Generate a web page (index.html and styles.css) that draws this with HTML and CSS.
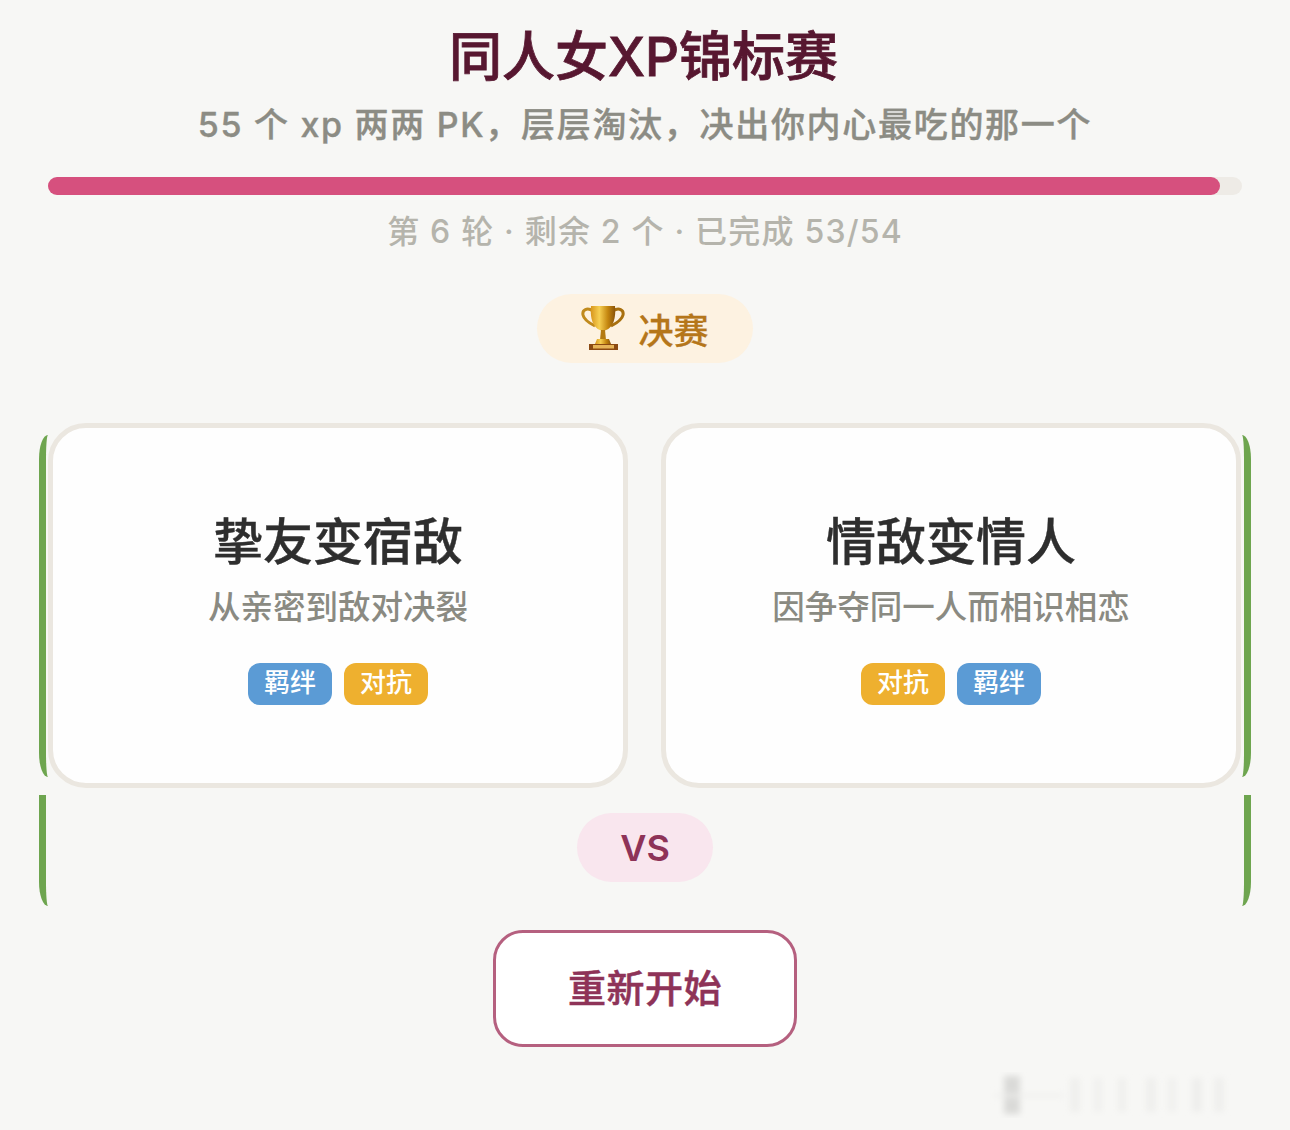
FILE: index.html
```html
<!DOCTYPE html>
<html lang="zh-CN">
<head>
    <meta charset="UTF-8">
    <meta name="viewport" content="width=device-width, initial-scale=1.0">
    <title>同人女XP锦标赛</title>
    <link rel="stylesheet" href="styles.css">
</head>
<body>
<div class="page">
    <h1 class="title">同人女XP锦标赛</h1>
    <p class="subtitle">55 个 xp 两两 PK，层层淘汰，决出你内心最吃的那一个</p>

    <div class="progress"><div class="progress-fill"></div></div>
    <p class="round-info">第 6 轮 · 剩余 2 个 · 已完成 53/54</p>

    <div class="stage-row">
        <div class="stage">
            <svg class="trophy" viewBox="0 0 44 46" aria-hidden="true">
                <defs>
                    <linearGradient id="gold" x1="0" y1="0" x2="1" y2="0">
                        <stop offset="0" stop-color="#d8961c"/>
                        <stop offset="0.35" stop-color="#f6cf52"/>
                        <stop offset="0.7" stop-color="#c4860f"/>
                        <stop offset="1" stop-color="#8a540b"/>
                    </linearGradient>
                </defs>
                <path d="M12 6C6 2 1 5 2 10c1 5 6 8 12 11" fill="none" stroke="#c08a1c" stroke-width="3"/>
                <path d="M32 6c6-4 11-1 10 4-1 5-6 8-12 11" fill="none" stroke="#a8700f" stroke-width="3"/>
                <path d="M10 1h24c1 11-1 23-12 25C11 24 9 12 10 1z" fill="url(#gold)"/>
                <path d="M20 25h4l1 10h-6z" fill="#b47a12"/>
                <path d="M16 34h12l2 5H14z" fill="url(#gold)"/>
                <path d="M8 39h29v6H8z" fill="#8b4a12"/>
                <path d="M12 40h21v3.500H12z" fill="#e6b458"/>
            </svg>
            <span>决赛</span>
        </div>
    </div>

    <div class="bracket cards">
        <div class="card">
            <h2 class="card-name">挚友变宿敌</h2>
            <p class="card-desc">从亲密到敌对决裂</p>
            <div class="tags">
                <span class="tag tag-blue">羁绊</span>
                <span class="tag tag-yellow">对抗</span>
            </div>
        </div>
        <div class="card">
            <h2 class="card-name">情敌变情人</h2>
            <p class="card-desc">因争夺同一人而相识相恋</p>
            <div class="tags">
                <span class="tag tag-yellow">对抗</span>
                <span class="tag tag-blue">羁绊</span>
            </div>
        </div>
    </div>

    <div class="bracket versus">
        <div class="vs">VS</div>
    </div>

    <button class="restart">重新开始</button>
</div>

<!-- faint site mark in the corner -->
<svg class="mark" viewBox="0 0 290 46" aria-hidden="true">
    <defs>
        <filter id="soft"><feGaussianBlur stdDeviation="3"/></filter>
    </defs>
    <g filter="url(#soft)">
        <rect x="14" y="4" width="16" height="38" fill="#dadad8"/>
        <rect x="4" y="22" width="70" height="3" fill="#efefed"/>
        <rect x="80" y="6" width="10" height="34" fill="#efefed"/>
        <rect x="104" y="6" width="8" height="34" fill="#f0f0ee"/>
        <rect x="128" y="6" width="8" height="34" fill="#efefed"/>
        <rect x="156" y="6" width="10" height="34" fill="#efefed"/>
        <rect x="178" y="6" width="8" height="34" fill="#f0f0ee"/>
        <rect x="202" y="6" width="10" height="34" fill="#eeeeec"/>
        <rect x="224" y="6" width="10" height="34" fill="#efefed"/>
    </g>
</svg>
</body>
</html>
```

FILE: styles.css
```css
* {
    box-sizing: border-box;
}

body {
    margin: 0;
    background-color: #f7f7f5;
    font-family: Inter, "Noto Sans CJK SC", sans-serif;
    height: 1130px;
    overflow: hidden;
    position: relative;
}

.page {
    padding: 25px 39px 0;
    display: flex;
    flex-direction: column;
}

.title {
    margin: 1px 0 0;
    padding-right: 3px;
    text-align: center;
    font-size: 53px;
    line-height: 62px;
    font-weight: 500;
    -webkit-text-stroke: 0.8px #571730;
    color: #571730;
}

.subtitle {
    margin: 10px 0 0;
    text-align: center;
    font-size: 34px;
    line-height: 54px;
    font-weight: 500;
    -webkit-text-stroke: 0.4px #8c8c84;
    letter-spacing: 1.7px;
    color: #8c8c84;
}

/* 进度条 */
.progress {
    margin: 25px 9px 0;
    height: 18px;
    border-radius: 9px;
    background-color: #eeebe6;
}

.progress-fill {
    width: 1172px;
    height: 100%;
    border-radius: 9px;
    background-color: #d6507e;
}

.round-info {
    margin: 14px 0 0;
    text-align: center;
    font-size: 32px;
    line-height: 46px;
    font-weight: 500;
    letter-spacing: 1.200px;
    color: #b5b4ac;
}

.stage-row {
    margin-top: 39px;
    display: flex;
    justify-content: center;
}

.stage {
    width: 216px;
    height: 69px;
    padding-bottom: 1px;
    border-radius: 35px;
    background-color: #fdf2e1;
    color: #b5761a;
    font-size: 35px;
    font-weight: 500;
    -webkit-text-stroke: 0.3px #b5761a;
    display: flex;
    align-items: center;
    justify-content: center;
    gap: 13px;
}

.trophy {
    width: 44px;
    height: 46px;
}

/* 两侧绿色边框，收口处是尖角 */
.bracket {
    border-left: 7px solid #6ea54f;
    border-right: 7px solid #6ea54f;
}

.cards {
    margin-top: 72px;
    height: 342px;
    padding: 0 3px 0 2px;
    border-radius: 9px / 24px;
    display: grid;
    grid-template-columns: 1fr 1fr;
    gap: 33px;
}

.card {
    margin: -12px 0 -11px;
    background-color: #fefefe;
    border: 5px solid #ebe7e0;
    border-radius: 38px;
    display: flex;
    flex-direction: column;
    align-items: center;
    padding-top: 81px;
}

.card-name {
    margin: 0;
    font-size: 50px;
    line-height: 66px;
    font-weight: 500;
    -webkit-text-stroke: 0.4px #2e2e2e;
    color: #2e2e2e;
}

.card-desc {
    margin: 11px 0 0;
    font-size: 32.500px;
    line-height: 44px;
    font-weight: 500;
    color: #8a8a82;
}

.tags {
    margin-top: 33px;
    display: flex;
    gap: 12px;
}

.tag {
    width: 84px;
    height: 42px;
    border-radius: 12px;
    font-size: 26px;
    font-weight: 500;
    line-height: 40px;
    text-align: center;
    color: #ffffff;
}

.tag-blue {
    background-color: #5b9bd5;
}

.tag-yellow {
    background-color: #eeb02f;
}

.versus {
    margin-top: 18px;
    height: 111px;
    padding-top: 18px;
    border-radius: 0 0 9px 9px / 0 0 24px 24px;
    display: flex;
    justify-content: center;
    align-items: flex-start;
}

.vs {
    width: 136px;
    height: 69px;
    padding-top: 1px;
    border-radius: 35px;
    background-color: #f9e6ee;
    color: #8e3358;
    font-size: 36px;
    font-weight: 600;
    line-height: 69px;
    text-align: center;
}

.restart {
    align-self: center;
    margin-top: 24px;
    width: 304px;
    height: 117px;
    padding: 0 0 6px;
    background-color: #ffffff;
    border: 3px solid #b5607f;
    border-radius: 30px;
    color: #8e3358;
    font-family: inherit;
    font-size: 38px;
    font-weight: 500;
    -webkit-text-stroke: 0.5px #8e3358;
    letter-spacing: 0.500px;
    cursor: pointer;
}

.mark {
    position: absolute;
    left: 990px;
    top: 1072px;
    width: 290px;
    height: 46px;
}
```
